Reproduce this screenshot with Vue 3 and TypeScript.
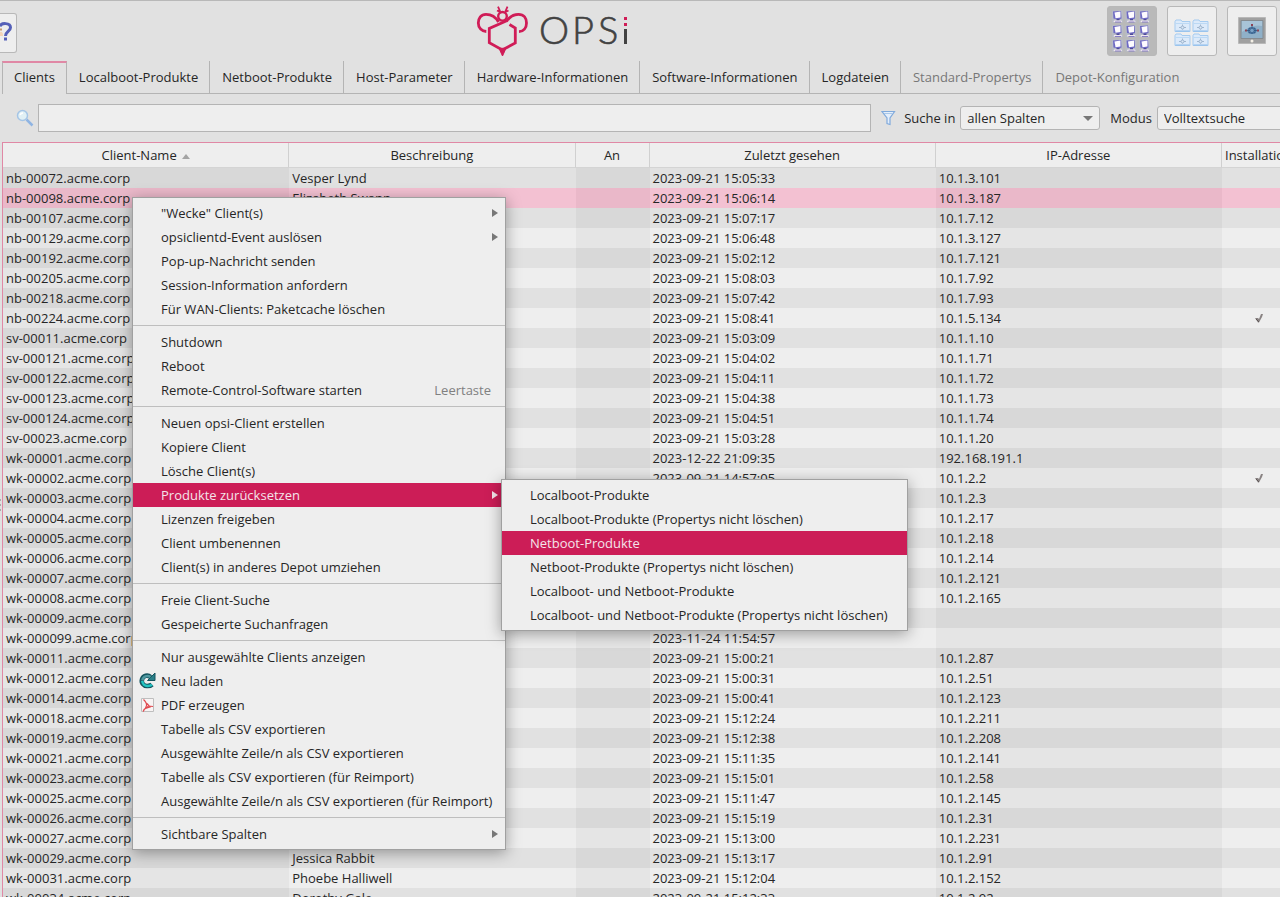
<script setup lang="ts">
import { ref } from 'vue'

interface Client {
  name: string
  description?: string
  seen: string
  ip: string
  installing?: boolean
  selected?: boolean
}

interface MenuEntry {
  label: string
  shortcut?: string
  submenu?: boolean
  children?: string[]
  icon?: 'reload' | 'pdf'
}

const client = (name: string, time: string, ip: string, more: Partial<Client> = {}): Client => ({
  name: `${name}.acme.corp`,
  seen: time.length === 8 ? `2023-09-21 ${time}` : time,
  ip,
  ...more,
})

const clients: Client[] = [
  client('nb-00072', '15:05:33', '10.1.3.101', { description: 'Vesper Lynd' }),
  client('nb-00098', '15:06:14', '10.1.3.187', { description: 'Elizabeth Swann', selected: true }),
  client('nb-00107', '15:07:17', '10.1.7.12'),
  client('nb-00129', '15:06:48', '10.1.3.127'),
  client('nb-00192', '15:02:12', '10.1.7.121'),
  client('nb-00205', '15:08:03', '10.1.7.92'),
  client('nb-00218', '15:07:42', '10.1.7.93'),
  client('nb-00224', '15:08:41', '10.1.5.134', { installing: true }),
  client('sv-00011', '15:03:09', '10.1.1.10'),
  client('sv-000121', '15:04:02', '10.1.1.71'),
  client('sv-000122', '15:04:11', '10.1.1.72'),
  client('sv-000123', '15:04:38', '10.1.1.73'),
  client('sv-000124', '15:04:51', '10.1.1.74'),
  client('sv-00023', '15:03:28', '10.1.1.20'),
  client('wk-00001', '2023-12-22 21:09:35', '192.168.191.1'),
  client('wk-00002', '14:57:05', '10.1.2.2', { installing: true }),
  client('wk-00003', '', '10.1.2.3'),
  client('wk-00004', '', '10.1.2.17'),
  client('wk-00005', '', '10.1.2.18'),
  client('wk-00006', '', '10.1.2.14'),
  client('wk-00007', '', '10.1.2.121'),
  client('wk-00008', '', '10.1.2.165'),
  client('wk-00009', '', ''),
  client('wk-000099', '2023-11-24 11:54:57', ''),
  client('wk-00011', '15:00:21', '10.1.2.87'),
  client('wk-00012', '15:00:31', '10.1.2.51'),
  client('wk-00014', '15:00:41', '10.1.2.123'),
  client('wk-00018', '15:12:24', '10.1.2.211'),
  client('wk-00019', '15:12:38', '10.1.2.208'),
  client('wk-00021', '15:11:35', '10.1.2.141'),
  client('wk-00023', '15:15:01', '10.1.2.58'),
  client('wk-00025', '15:11:47', '10.1.2.145'),
  client('wk-00026', '15:15:19', '10.1.2.31'),
  client('wk-00027', '15:13:00', '10.1.2.231'),
  client('wk-00029', '15:13:17', '10.1.2.91', { description: 'Jessica Rabbit' }),
  client('wk-00031', '15:12:04', '10.1.2.152', { description: 'Phoebe Halliwell' }),
  client('wk-00034', '15:12:33', '10.1.2.92', { description: 'Dorothy Gale' }),
]

const tabs = [
  { label: 'Clients' },
  { label: 'Localboot-Produkte' },
  { label: 'Netboot-Produkte' },
  { label: 'Host-Parameter' },
  { label: 'Hardware-Informationen' },
  { label: 'Software-Informationen' },
  { label: 'Logdateien' },
  { label: 'Standard-Propertys', disabled: true },
  { label: 'Depot-Konfiguration', disabled: true },
]

const menuGroups: MenuEntry[][] = [
  [
    { label: '"Wecke" Client(s)', submenu: true },
    { label: 'opsiclientd-Event auslösen', submenu: true },
    { label: 'Pop-up-Nachricht senden' },
    { label: 'Session-Information anfordern' },
    { label: 'Für WAN-Clients: Paketcache löschen' },
  ],
  [
    { label: 'Shutdown' },
    { label: 'Reboot' },
    { label: 'Remote-Control-Software starten', shortcut: 'Leertaste' },
  ],
  [
    { label: 'Neuen opsi-Client erstellen' },
    { label: 'Kopiere Client' },
    { label: 'Lösche Client(s)' },
    {
      label: 'Produkte zurücksetzen',
      submenu: true,
      children: [
        'Localboot-Produkte',
        'Localboot-Produkte (Propertys nicht löschen)',
        'Netboot-Produkte',
        'Netboot-Produkte (Propertys nicht löschen)',
        'Localboot- und Netboot-Produkte',
        'Localboot- und Netboot-Produkte (Propertys nicht löschen)',
      ],
    },
    { label: 'Lizenzen freigeben' },
    { label: 'Client umbenennen' },
    { label: 'Client(s) in anderes Depot umziehen' },
  ],
  [{ label: 'Freie Client-Suche' }, { label: 'Gespeicherte Suchanfragen' }],
  [
    { label: 'Nur ausgewählte Clients anzeigen' },
    { label: 'Neu laden', icon: 'reload' },
    { label: 'PDF erzeugen', icon: 'pdf' },
    { label: 'Tabelle als CSV exportieren' },
    { label: 'Ausgewählte Zeile/n als CSV exportieren' },
    { label: 'Tabelle als CSV exportieren (für Reimport)' },
    { label: 'Ausgewählte Zeile/n als CSV exportieren (für Reimport)' },
  ],
  [{ label: 'Sichtbare Spalten', submenu: true }],
]

const activeTab = ref('Clients')
const activeSub = ref('Netboot-Produkte')
const query = ref('')
const cells = [0, 1, 2]
</script>

<template>
  <div class="app">
    <header class="toolbar">
      <button class="help" type="button" aria-label="Hilfe">
        <svg width="16" height="38" viewBox="0 0 16 38" aria-hidden="true">
          <path d="M0 14.500h2v2H0z" fill="#c79a70" />
          <path d="M0 18q3-1 3 4H0z" fill="#f3d5b7" />
          <path d="M0 12.500C1 8.500 10.500 8.500 10.500 13.500c0 4-5 4-5 8.500" fill="none" stroke="#5560b8" stroke-width="3" />
          <path d="M4 23.500h3v3H4z" fill="#5560b8" />
        </svg>
      </button>
      <svg class="logo" width="154" height="52" viewBox="0 0 154 52" role="img" aria-label="OPSi">
        <g fill="none" stroke="#d01c57" stroke-width="2.800">
          <path d="M30.700 15.700L13.300 23.500V37.700L26.300 45 39.300 38V23L33.500 19.500" />
          <path d="M22.500 17C20 12.500 15 9.300 10 9.300 5 9.300 2.300 13.500 2.300 18c0 5 3.500 8.300 8 8.500" />
          <path d="M30.500 16.500C33 12.500 37.500 9.300 42.500 9.300 48 9.300 50.500 13.500 50.500 18c0 5-3 8.500-7.500 8.700" />
          <circle cx="26.500" cy="11.300" r="4.300" stroke-width="2.400" />
          <path d="M22 1.700l2.200 5M31.500 1.700l-2.200 5M21 5.500l3.500 1.700M32.500 5.500L29 7.200" stroke-width="1.800" />
        </g>
        <path d="M23 43.300h7l-3.500 7.700z" fill="#d01c57" stroke="#d01c57" />
        <g class="wordmark">
          <text x="63" y="39">O</text>
          <text x="96" y="39">P</text>
          <text x="122" y="39">S</text>
        </g>
        <path d="M148 12h3v3h-3zM148 18h3v3h-3z" fill="#d01c57" />
        <path d="M148 24h3v15h-3z" fill="#424242" />
      </svg>
      <div class="modes">
        <button class="mode active" type="button" aria-label="Client-Konfiguration">
          <svg width="40" height="42" viewBox="0 0 40 42" aria-hidden="true">
            <template v-for="r in cells" :key="r">
              <g v-for="c in cells" :key="c" :transform="`translate(${c * 13.5} ${r * 14.5})`">
                <path d="M0 .5h11v12H0z" fill="#b5bdcf" opacity=".6" />
                <path d="M1 1.500l8-.5.500 7.500-3 1-5-1z" fill="#6d69c4" />
                <path d="M2.500 2.500l6-1v6l-5 .800z" fill="#fdfbff" />
                <path d="M4.500 9h3v1.500h-3z" fill="#4f4b9b" />
                <path d="M2 10.500h7.500l.500 1.500H1.500z" fill="#f0e8f0" />
                <path d="M3 12h6" stroke="#7468bd" stroke-width=".8" />
              </g>
            </template>
          </svg>
        </button>
        <button class="mode" type="button" aria-label="Depot-Konfiguration">
          <svg class="folders" width="36" height="28" viewBox="0 0 36 28" aria-hidden="true">
            <g v-for="n in 4" :key="n" :transform="`translate(${((n - 1) % 2) * 18} ${n > 2 ? 14 : 0})`">
              <path d="M1 12.500V2.500L2 1h5l1 1.500h8v10z" fill="#dceafa" stroke="#a5cbf0" />
              <path d="M1.500 4.500h14" stroke="#bcd9f4" />
              <path d="M1.500 12h14" stroke="#8fbdea" />
              <path d="M5 8.500h7M8.500 5.500v5" stroke="#a3b7cd" />
              <circle cx="8.500" cy="8.500" r="1.500" fill="#dce9f6" stroke="#9bb3ce" />
            </g>
          </svg>
        </button>
        <button class="mode" type="button" aria-label="Server-Konfiguration">
          <svg width="28" height="28" viewBox="0 0 28 28" aria-hidden="true">
            <path d="M.5.5h27v26H.5z" fill="#a0a0a0" stroke="#b8b8b8" />
            <path d="M3 3.500h22v18H3z" fill="#8fb0c8" stroke="#858b90" />
            <path d="M4 4h20v5Q14 7 4 15z" fill="#a8c4d8" />
            <ellipse cx="14" cy="13.500" rx="4.500" ry="3.500" fill="#4a76a3" />
            <path d="M8 13.500h12M14 9v8M11 11l6 5M17 11l-6 5" stroke="#33587f" stroke-width=".8" />
            <path d="M13 7h2v2h-2zM7 12.500h2v2H7zM19 12.500h2v2h-2z" fill="#8d4355" />
            <circle cx="14" cy="13.500" r="1.800" fill="#79a2c5" />
            <circle cx="14" cy="24" r="1.500" fill="#f4f0e6" />
          </svg>
        </button>
      </div>
    </header>

    <nav class="tabs" role="tablist">
      <button
        v-for="tab in tabs"
        :key="tab.label"
        class="tab"
        :class="{ active: tab.label === activeTab }"
        type="button"
        role="tab"
        :aria-selected="tab.label === activeTab"
        :disabled="tab.disabled"
        @click="activeTab = tab.label"
      >{{ tab.label }}</button>
    </nav>

    <main class="workspace">
      <form class="search" @submit.prevent>
        <label for="query" aria-label="Suche">
          <svg width="18" height="18" viewBox="0 0 18 18" aria-hidden="true">
            <path d="M10.500 10.500l6 6" stroke="#8fb4e2" stroke-width="2.500" />
            <circle cx="6.500" cy="6.500" r="5" fill="#e1f0f5" stroke="#a5c5e6" stroke-width="1.500" />
            <path d="M4 6q1-2 3-2" fill="none" stroke="#fff" stroke-width="1.500" />
          </svg>
        </label>
        <input id="query" v-model="query" type="text" />
        <svg class="funnel" width="15" height="16" viewBox="0 0 15 16" aria-hidden="true">
          <path d="M1 1.500h12.500L9 8v6.500l-3-1V8z" fill="#e4eefa" stroke="#80aadc" stroke-width="1.200" />
          <path d="M3 3.500h8" stroke="#a9c8ea" />
        </svg>
        <label for="column">Suche in</label>
        <span class="select">
          <select id="column"><option>allen Spalten</option></select>
        </span>
        <label class="second" for="search-mode">Modus</label>
        <span class="select">
          <select id="search-mode"><option>Volltextsuche</option></select>
        </span>
      </form>

      <div class="grid">
        <table>
          <colgroup>
            <col />
            <col />
            <col class="narrow" />
            <col />
            <col />
            <col class="narrow" />
          </colgroup>
          <thead>
            <tr>
              <th scope="col">Client-Name<span class="sort"></span></th>
              <th scope="col">Beschreibung</th>
              <th scope="col">An</th>
              <th scope="col">Zuletzt gesehen</th>
              <th scope="col">IP-Adresse</th>
              <th scope="col">Installation</th>
            </tr>
          </thead>
          <tbody>
            <tr v-for="row in clients" :key="row.name" :class="{ selected: row.selected }">
              <td>{{ row.name }}</td>
              <td>{{ row.description }}</td>
              <td></td>
              <td>{{ row.seen }}</td>
              <td>{{ row.ip }}</td>
              <td class="mark">
                <svg v-if="row.installing" width="10" height="10" viewBox="0 0 10 10" role="img" aria-label="Ja">
                  <path d="M1 5h3l1 1 2-5h2L8 4 5 9.500H4z" fill="#8a8484" />
                  <path d="M2 6l3 3" stroke="#5e5656" />
                </svg>
              </td>
            </tr>
          </tbody>
        </table>
      </div>
    </main>

    <span class="grip"></span>

    <div class="menu context" role="menu">
      <div v-for="(group, g) in menuGroups" :key="g" class="group" role="group">
        <div v-for="item in group" :key="item.label" class="slot">
          <button class="item" :class="{ active: item.children }" type="button" role="menuitem">
            <svg v-if="item.icon === 'reload'" class="icon" width="18" height="18" viewBox="0 0 18 18" aria-hidden="true">
              <path d="M14 12.500Q12.500 14 9.500 14A5.200 5.200 0 1 1 12.500 5" fill="none" stroke="#14545e" stroke-width="4.600" />
              <path d="M9.500 8.500h7.500V1z" fill="#2a7f88" stroke="#14545e" />
              <path d="M14 12.800Q12.500 14 9.500 14A5.200 5.200 0 0 1 4.300 9" fill="none" stroke="#22c4c2" stroke-width="2.600" />
              <path d="M4.300 8.500A5.200 5.200 0 0 1 12.500 5" fill="none" stroke="#4f98a0" stroke-width="2.400" />
            </svg>
            <svg v-else-if="item.icon === 'pdf'" class="icon" width="18" height="18" viewBox="0 0 18 18" aria-hidden="true">
              <path d="M3.500 2.500h12v13h-12z" fill="#f8f4f4" stroke="#bebebe" />
              <path d="M5.500 3.500Q9 7 8.500 9.500T5 15.500M5.500 14l5-4 4.500.5M9 7.500l3 3.500-6 2" fill="none" stroke="#e04a50" stroke-width="1.200" />
            </svg>
            <span>{{ item.label }}</span>
            <span v-if="item.shortcut" class="shortcut">{{ item.shortcut }}</span>
            <span v-if="item.submenu" class="arrow"></span>
          </button>
          <div v-if="item.children" class="menu submenu" role="menu">
            <button
              v-for="child in item.children"
              :key="child"
              class="item"
              :class="{ active: child === activeSub }"
              type="button"
              role="menuitem"
              @mouseenter="activeSub = child"
            >{{ child }}</button>
          </div>
        </div>
      </div>
    </div>
  </div>
</template>

<style>
body {
  margin: 0;
}
</style>

<style scoped>
.app {
  position: relative;
  box-sizing: border-box;
  height: 100vh;
  overflow: hidden;
  border-top: 1px solid #b8b8b8;
  background: #e1e1e1;
  color: #262626;
  font: 13px/20px "Open Sans", "Noto Sans", sans-serif;
}
button,
input,
select {
  box-sizing: border-box;
  margin: 0;
  color: inherit;
  font: inherit;
}
button {
  padding: 0;
}
.toolbar {
  display: flex;
  align-items: flex-start;
  height: 60px;
}
.help {
  width: 17px;
  height: 40px;
  margin-top: 12px;
  border: 1px solid #b8b8b8;
  border-left: 0;
  border-radius: 0 3px 3px 0;
  background: #eee;
}
.help svg {
  display: block;
}
.toolbar::before {
  content: "";
  order: 1;
  flex: 25;
}
.toolbar::after {
  content: "";
  order: 3;
  flex: 26;
}
.logo {
  order: 2;
  margin-top: 4px;
}
.wordmark {
  fill: #424242;
  stroke: #424242;
  stroke-width: 0.6px;
  font: 300 38px Lato, sans-serif;
}
.modes {
  display: flex;
  order: 4;
  gap: 10px;
  padding: 5px 3px 0 0;
}
.mode {
  display: grid;
  place-items: center;
  width: 50px;
  height: 50px;
  border: 1px solid #b8b8b8;
  border-radius: 3px;
  background: #eee;
}
.mode.active {
  background: #b9b9b9;
}
.folders {
  margin-top: 4px;
}
.tabs {
  display: flex;
  height: 33px;
  padding-left: 2px;
  white-space: nowrap;
}
.tabs::after {
  content: "";
  flex: 1;
  border-bottom: 1px solid #b4b4b4;
}
.tab {
  padding: 0 11px 0 12px;
  border: 0;
  border-right: 1px solid #b4b4b4;
  border-bottom: 1px solid #b4b4b4;
  background: none;
}
.tab:last-of-type {
  border-right: 0;
}
.tab.active {
  padding: 0 11px 3px;
  border-top: 2px solid #e088a5;
  border-left: 1px solid #b4b4b4;
  border-bottom: 0;
}
.tab:disabled {
  color: #777;
}
.workspace {
  margin-right: -17px;
}
.search {
  display: flex;
  align-items: center;
  height: 48px;
  padding-left: 16px;
}
.search label {
  white-space: nowrap;
}
.search label svg {
  display: block;
}
.search input {
  flex: 1;
  height: 28px;
  margin-left: 4px;
  padding: 0 4px;
  border: 1px solid #b4b4b4;
  background: #eee;
}
.funnel {
  margin: 0 8px 0 10px;
}
.select {
  position: relative;
  margin-left: 5px;
}
.select::after {
  content: "";
  position: absolute;
  top: 10px;
  right: 7px;
  border: 5px solid transparent;
  border-top-color: #777;
  border-bottom: 0;
}
.select select {
  display: block;
  width: 140px;
  height: 24px;
  padding: 0 6px;
  border: 1px solid #b4b4b4;
  border-radius: 3px;
  background: #eee;
  appearance: none;
}
.second {
  margin-left: 10px;
}
.grid {
  margin-left: 2px;
  border: 1px solid #e088a5;
}
table {
  width: 100%;
  border-collapse: separate;
  border-spacing: 0;
  table-layout: fixed;
}
.narrow {
  width: 74px;
}
th {
  box-sizing: border-box;
  height: 25px;
  padding: 0 3px;
  border-right: 1px solid #d0d0d0;
  border-bottom: 1px solid #d4d4d4;
  background: #eee;
  font-weight: 400;
  white-space: nowrap;
}
.sort {
  display: inline-block;
  margin-left: 5px;
  border: 4px solid transparent;
  border-top: 0;
  border-bottom: 5px solid #a4a4a4;
  vertical-align: 1px;
}
td {
  height: 20px;
  padding: 0 3px;
  background: #eee;
  white-space: nowrap;
}
td:nth-child(2n + 1) {
  background: #e5e5e5;
}
tbody tr:nth-child(odd) td {
  background: #e1e1e1;
}
tbody tr:nth-child(odd) td:nth-child(2n + 1) {
  background: #d8d8d8;
}
tbody tr.selected td {
  background: #f3c1d2;
}
tbody tr.selected td:nth-child(2n + 1) {
  background: #eab8c9;
}
.mark {
  text-align: center;
}
.mark svg {
  display: block;
  margin: auto;
}
.grip {
  position: absolute;
  top: 498px;
  left: 0;
  width: 1px;
  height: 14px;
  background: repeating-linear-gradient(#aaa 0 2px, transparent 2px 5px);
}
.menu {
  position: absolute;
  box-sizing: border-box;
  padding: 3px 0;
  border: 1px solid #a0a0a0;
  background: #eee;
  box-shadow: 0 3px 14px rgba(0, 0, 0, 0.35);
}
.context {
  top: 196px;
  left: 132px;
  width: 374px;
}
.submenu {
  z-index: 1;
  top: -4px;
  left: calc(100% - 4px);
  width: 407px;
}
.group + .group {
  margin-top: 4px;
  padding-top: 4px;
  border-top: 1px solid #bebebe;
}
.slot {
  position: relative;
}
.item {
  display: flex;
  position: relative;
  align-items: center;
  width: 100%;
  height: 24px;
  padding: 0 14px 0 28px;
  border: 0;
  background: none;
  text-align: left;
  white-space: nowrap;
}
.item.active {
  background: #cc1d57;
  color: #f4e4ea;
}
.icon {
  position: absolute;
  left: 5px;
}
.shortcut {
  margin-left: auto;
  color: #808080;
}
.arrow {
  margin: 0 -7px 0 auto;
  border: 4px solid transparent;
  border-right: 0;
  border-left: 6px solid #777;
}
.active .arrow {
  border-left-color: #f4e4ea;
}
</style>
